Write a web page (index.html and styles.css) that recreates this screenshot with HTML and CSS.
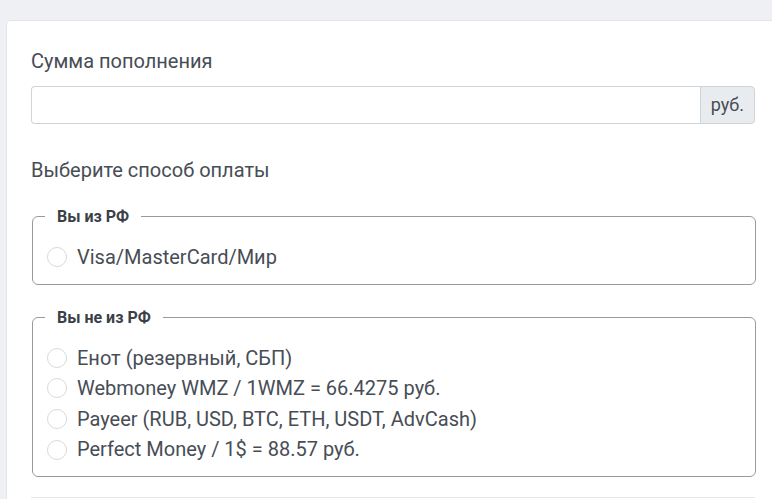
FILE: index.html
```html
<!DOCTYPE html>
<html lang="ru">
<head>
    <meta charset="UTF-8">
    <meta name="viewport" content="width=device-width, initial-scale=1.0">
    <title>Пополнение баланса</title>
    <link rel="stylesheet" href="styles.css">
</head>
<body>
    <div class="card">
        <form id="payForm">
            <label class="field-label" for="amount">Сумма пополнения</label>
            <div class="input-group">
                <input type="text" id="amount" name="amount">
                <span class="addon">руб.</span>
            </div>

            <div class="field-label method-label">Выберите способ оплаты</div>

            <fieldset>
                <legend>Вы из РФ</legend>
                <label class="option"><input type="radio" name="method" value="card"> Visa/MasterCard/Мир</label>
            </fieldset>

            <fieldset>
                <legend>Вы не из РФ</legend>
                <label class="option"><input type="radio" name="method" value="enot"> Енот (резервный, СБП)</label>
                <label class="option"><input type="radio" name="method" value="wmz"> Webmoney WMZ / 1WMZ = 66.4275 руб.</label>
                <label class="option"><input type="radio" name="method" value="payeer"> Payeer (RUB, USD, BTC, ETH, USDT, AdvCash)</label>
                <label class="option"><input type="radio" name="method" value="pm"> Perfect Money / 1$ = 88.57 руб.</label>
            </fieldset>

            <hr>
        </form>
    </div>
</body>
</html>
```

FILE: styles.css
```css
html, body {
    overflow: hidden;
}

body {
    font-family: Roboto, "Noto Sans", sans-serif;
    background-color: #eef0f3;
    color: #474d55;
    margin: 0;
    padding: 20px 0 0 6px;
}

.card {
    width: 800px;
    background-color: #fff;
    border: 1px solid #e2e5e9;
    border-radius: 4px;
    padding: 27px 24px 26px;
}

.field-label {
    display: block;
    font-size: 20px;
    line-height: 27px;
    margin-bottom: 11px;
}

.input-group {
    display: flex;
    width: 724px;
    margin-bottom: 33px;
}

.input-group input {
    flex: 1;
    height: 38px;
    box-sizing: border-box;
    border: 1px solid #ced4da;
    border-right: none;
    border-radius: 4px 0 0 4px;
    padding: 6px 12px;
    font-family: inherit;
    font-size: 18px;
}

.addon {
    height: 38px;
    box-sizing: border-box;
    padding: 6px 10px;
    font-size: 18px;
    line-height: 24px;
    background-color: #e9ecef;
    border: 1px solid #ced4da;
    border-radius: 0 4px 4px 0;
    color: #474d55;
}

.method-label {
    margin-bottom: 22px;
}

fieldset {
    width: 724px;
    box-sizing: border-box;
    margin: 0 0 22px 1px;
    border: 1px solid #9a9a9a;
    border-radius: 6px;
    padding: 15px 14px 11px;
}

fieldset:last-of-type {
    margin-bottom: 0;
}

legend {
    font-size: 16px;
    font-weight: bold;
    color: #3b4047;
    line-height: 21px;
    padding: 0 12px;
    margin-left: -2px;
}

.option {
    display: flex;
    align-items: center;
    font-size: 20px;
    line-height: 30.6px;
    cursor: pointer;
}

.option input[type="radio"] {
    appearance: none;
    width: 20px;
    height: 20px;
    margin: 0 10px 0 0;
    border: 1px solid #d6dade;
    border-radius: 50%;
    background-color: #fff;
}

.option input[type="radio"]:checked {
    border: 6px solid #007bff;
}

hr {
    width: 724px;
    margin: 20px 0 0;
    border: none;
    border-top: 1px solid #e4e7ea;
}
```
